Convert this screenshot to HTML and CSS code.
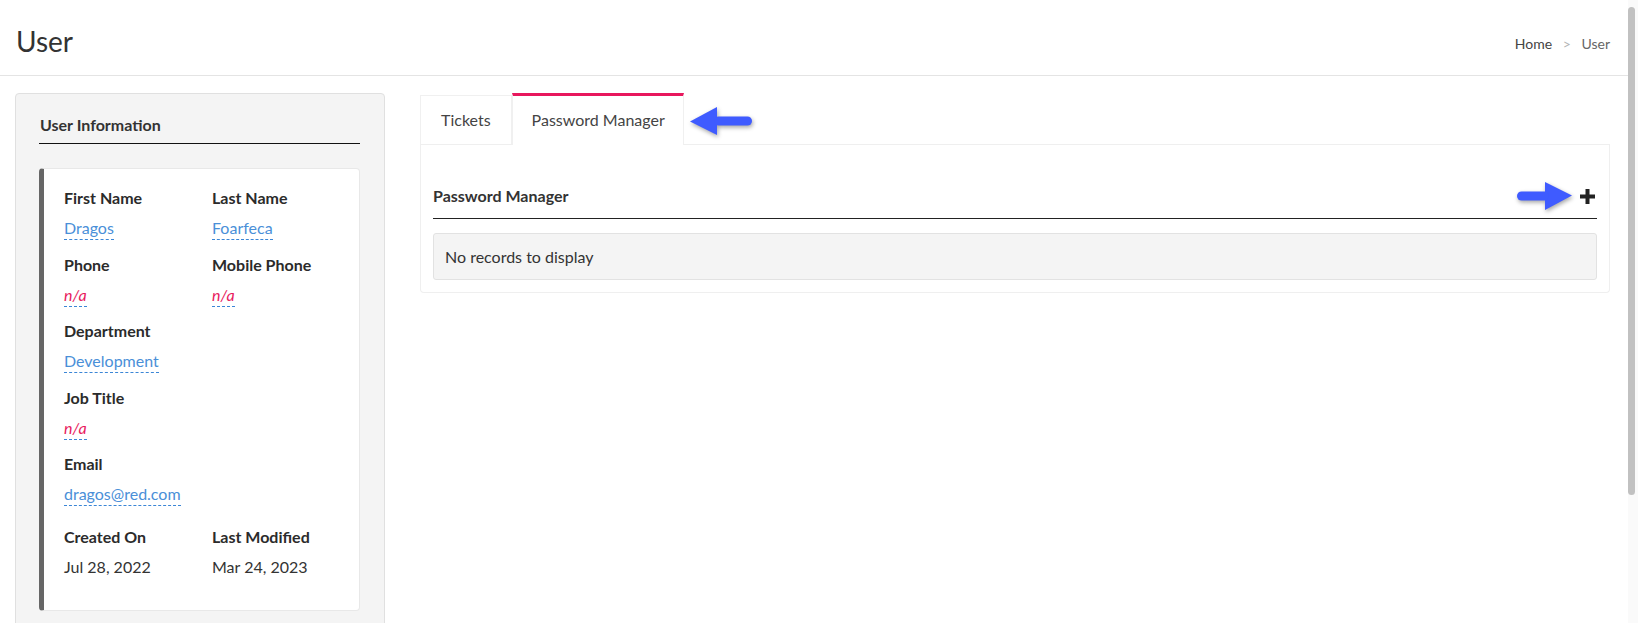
FILE: index.html
```html
<!DOCTYPE html>
<html>
<head>
<title>User</title>
<meta name="viewport" content="width=device-width, initial-scale=1">
<link rel="stylesheet" href="styles.css">
</head>
<body>

<header class="page-header">
  <h1>User</h1>
  <nav class="crumbs">
    <a href="#">Home</a>
    <span class="sep">&gt;</span>
    <span class="current">User</span>
  </nav>
</header>

<div class="layout">

  <aside class="info-card">
    <h3 class="card-title">User Information</h3>

    <div class="details">
      <div class="row">
        <div class="field">
          <div class="label">First Name</div>
          <div class="value"><a class="editable" href="#">Dragos</a></div>
        </div>
        <div class="field">
          <div class="label">Last Name</div>
          <div class="value"><a class="editable" href="#">Foarfeca</a></div>
        </div>
      </div>
      <div class="row">
        <div class="field">
          <div class="label">Phone</div>
          <div class="value"><a class="editable empty" href="#">n/a</a></div>
        </div>
        <div class="field">
          <div class="label">Mobile Phone</div>
          <div class="value"><a class="editable empty" href="#">n/a</a></div>
        </div>
      </div>
      <div class="row">
        <div class="field">
          <div class="label">Department</div>
          <div class="value"><a class="editable" href="#">Development</a></div>
        </div>
      </div>
      <div class="row">
        <div class="field">
          <div class="label">Job Title</div>
          <div class="value"><a class="editable empty" href="#">n/a</a></div>
        </div>
      </div>
      <div class="row">
        <div class="field">
          <div class="label">Email</div>
          <div class="value"><a class="editable" href="#">dragos@red.com</a></div>
        </div>
      </div>
      <div class="row dates">
        <div class="field">
          <div class="label">Created On</div>
          <div class="value">Jul 28, 2022</div>
        </div>
        <div class="field">
          <div class="label">Last Modified</div>
          <div class="value">Mar 24, 2023</div>
        </div>
      </div>
    </div>
  </aside>

  <section class="content">
    <div class="tabs">
      <a class="tab" href="#">Tickets</a>
      <a class="tab active" href="#">Password Manager</a>
      <svg class="pointer" width="62" height="28" viewBox="0 0 62 28">
        <polygon points="0,14.5 27,0 27,28" fill="#3f5bff"/>
        <rect x="24" y="9.5" width="38" height="9" rx="4.5" fill="#3f5bff"/>
      </svg>
    </div>

    <div class="tab-panel">
      <div class="panel-head">
        <h4>Password Manager</h4>
        <div class="actions">
          <svg class="pointer" width="56" height="28" viewBox="0 0 56 28">
            <polygon points="55,13.5 28,0 28,28" fill="#3f5bff"/>
            <rect x="0" y="9.5" width="32" height="9" rx="4.5" fill="#3f5bff"/>
          </svg>
          <a class="add" href="#" title="Add">
            <svg width="17" height="17" viewBox="0 0 17 17">
              <path d="M8.5 1 V16 M1 8.5 H16" stroke="#222" stroke-width="4"/>
            </svg>
          </a>
        </div>
      </div>
      <div class="empty-box">No records to display</div>
    </div>
  </section>

</div>

<div class="scrollbar"><div class="thumb"></div></div>

</body>
</html>
```

FILE: styles.css
```css
body {
  margin: 0 10px 0 0;
  font-family: Lato, "Noto Sans", sans-serif;
  font-size: 16px;
  color: #333;
  background: #fff;
}

a {
  text-decoration: none;
}

/* fake window scrollbar */

.scrollbar {
  position: fixed;
  top: 0;
  right: 0;
  width: 10px;
  height: 100vh;
  background: #fafafa;
}

.scrollbar .thumb {
  margin-top: 7px;
  width: 7px;
  height: 488px;
  background: #c1c1c1;
  border-radius: 4px;
}

/* header */

.page-header {
  display: flex;
  align-items: center;
  justify-content: space-between;
  height: 75px;
  padding: 0 18px 0 16px;
  border-bottom: 1px solid #e4e4e4;
}

.page-header h1 {
  margin: 0;
  font-size: 28px;
  font-weight: 400;
  color: #333;
  padding-top: 6px;
}

.crumbs {
  font-size: 14px;
  padding-top: 11px;
}

.crumbs a {
  color: #444;
}

.crumbs .sep {
  color: #b5b5b5;
  margin: 0 7px;
}

.crumbs .current {
  color: #666;
}

/* layout */

.layout {
  display: grid;
  grid-template-columns: 370px 1fr;
  gap: 35px;
  padding: 17px 18px 160px 15px;
}

/* user info card */

.info-card {
  background: #f4f4f4;
  border: 1px solid #e0e0e0;
  border-radius: 4px;
  padding: 20px 24px 24px 23px;
}

.card-title {
  margin: 0;
  font-size: 16px;
  font-weight: 700;
  line-height: 22px;
  padding: 0 0 7px 1px;
  border-bottom: 1px solid #111;
  color: #333;
}

.details {
  margin-top: 24px;
  background: #fff;
  border: 1px solid #e8e8e8;
  border-left: 5px solid #666;
  border-radius: 4px;
  padding: 17px 10px 18px 20px;
}

.row {
  display: grid;
  grid-template-columns: 148px 1fr;
  margin-bottom: 12.5px;
}

.row.dates {
  margin-top: 19px;
}

.label {
  font-weight: 700;
  line-height: 24px;
  color: #2b2b2b;
}

.value {
  margin-top: 6px;
  line-height: 24px;
  color: #333;
}

.editable {
  color: #4a8fd8;
  padding-bottom: 2px;
  border-bottom: 1px dashed #3b86d6;
}

.editable.empty {
  color: #e8195d;
  font-style: italic;
}

/* tabs */

.tabs {
  display: flex;
  align-items: flex-end;
  border-bottom: 1px solid #efefef;
}

.tab {
  display: block;
  height: 48px;
  line-height: 48px;
  padding: 0 20px;
  color: #444;
  border: 1px solid #f0f0f0;
  border-bottom: none;
}

.tab.active {
  border-top: 3px solid #e8175d;
  margin-bottom: -1px;
  height: 49px;
  background: #fff;
  padding: 0 18px 0 19px;
}

.tabs .pointer {
  align-self: center;
  margin: 4px 0 0 6px;
  filter: drop-shadow(1px 2px 2px rgba(0, 0, 0, 0.35));
}

.tab-panel {
  border: 1px solid #efefef;
  border-top: none;
  border-radius: 0 0 4px 4px;
  padding: 37px 12px 12px 12px;
}

.panel-head {
  display: flex;
  align-items: center;
  justify-content: space-between;
  border-bottom: 1px solid #222;
  padding-bottom: 8px;
}

.panel-head h4 {
  margin: 0;
  font-size: 16px;
  font-weight: 700;
  line-height: 24px;
  color: #333;
}

.actions {
  display: flex;
  align-items: center;
  gap: 6px;
  margin-right: 1px;
}

.actions .pointer {
  filter: drop-shadow(1px 2px 2px rgba(0, 0, 0, 0.35));
}

.add {
  display: block;
  line-height: 0;
}

.empty-box {
  margin-top: 14px;
  background: #f4f4f4;
  border: 1px solid #e2e2e2;
  border-radius: 3px;
  padding: 0 11px;
  line-height: 45px;
  color: #333;
}
```
